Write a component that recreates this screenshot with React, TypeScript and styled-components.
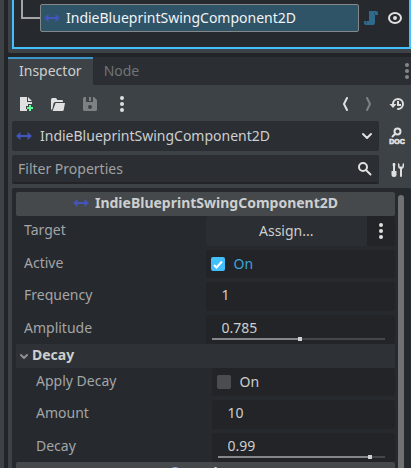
import React, { useState } from "react";
import styled, { createGlobalStyle, css } from "styled-components";

const c = {
  base: "#3d4246",
  gutter: "#232428",
  deep: "#26292e",
  field: "#2b2e32",
  value: "#232428",
  section: "#2e3135",
  heading: "#45494b",
  text: "#cdcfd0",
  label: "#a3a5a7",
  accent: "#42bffd",
  icon: "#e0e0e0",
};

const Global = createGlobalStyle`
  * { box-sizing: border-box; }
  body { margin: 0; background: ${c.gutter}; overflow: hidden; }
  body, button, input, select {
    font-family: "Noto Sans", sans-serif;
    font-size: 14px;
    line-height: 20px;
    color: ${c.text};
  }
  button, input, select { margin: 0; padding: 0; border: 0; background: none; outline: none; }
`;

const Window = styled.div`
  display: flex;
  height: 100vh;
  overflow: hidden;
`;
const SideStrip = styled.div`
  width: 4px;
  margin-right: 4px;
  flex: none;
  background: ${c.base};
`;
const Docks = styled.div`
  flex: 1;
  min-width: 0;
  display: flex;
  flex-direction: column;
  gap: 4px;
`;
const SceneDock = styled.section`
  padding: 0 0 4px 4px;
  background: ${c.base};
  border-radius: 0 0 0 2px;
`;
const SceneTree = styled.div`
  display: flex;
  align-items: flex-start;
  height: 49px;
  padding: 0 6px 0 7px;
  background: ${c.deep};
  border: 2px solid ${c.accent};
  border-top: 0;
`;
const Branch = styled.div`
  width: 19px;
  height: 19px;
  flex: none;
  border-left: 2px solid #a3a5a6;
  border-bottom: 2px solid #a3a5a6;
`;
const NodeItem = styled.div`
  flex: 1;
  min-width: 0;
  height: 28px;
  margin-top: 4px;
  padding: 0 3px;
  display: flex;
  align-items: center;
  gap: 6px;
  white-space: nowrap;
  color: #f2f4f5;
  background: #2f5367;
  border: 1px solid #858889;
  border-radius: 2px;
`;
const NodeActions = styled.div`
  height: 36px;
  padding-left: 4px;
  display: flex;
  align-items: center;
  gap: 8px;
`;
const IconButton = styled.button<{ $w?: number }>`
  width: ${(p) => p.$w ?? 28}px;
  height: 26px;
  flex: none;
  display: flex;
  align-items: center;
  justify-content: center;
  &:disabled { opacity: 0.4; }
`;

const Inspector = styled.section`
  flex: 1;
  min-height: 0;
  display: flex;
  flex-direction: column;
  background: ${c.base};
`;
const TabBar = styled.div`
  display: flex;
  height: 28px;
  flex: none;
  background: ${c.field};
`;
const Tab = styled.button<{ $active?: boolean }>`
  padding: 0 11px 2px;
  border-top: 2px solid transparent;
  color: #717476;
  ${(p) =>
    p.$active &&
    css`
      color: ${c.text};
      background: ${c.base};
      border-top-color: #3b95c8;
    `}
`;
const TabMenu = styled.button`
  width: 16px;
  margin-left: auto;
  margin-right: -4px;
  display: flex;
  align-items: center;
  justify-content: center;
`;
const Body = styled.div`
  flex: 1;
  min-height: 0;
  display: flex;
  flex-direction: column;
  gap: 4px;
  padding: 6px 0 0 4px;
`;
const Bar = styled.div`
  display: flex;
  align-items: center;
  gap: 4px;
  flex: none;
`;
const Spacer = styled.div`
  flex: 1;
`;
const Field = styled.div<{ $filter?: boolean }>`
  flex: 1;
  min-width: 0;
  height: ${(p) => (p.$filter ? 29 : 30)}px;
  display: grid;
  align-items: center;
  background: ${c.field};
  border-radius: 2px;
  border-bottom: ${(p) => (p.$filter ? `2px solid ${c.gutter}` : "0")};
  > * { grid-area: 1 / 1; }
`;
const Select = styled.select`
  appearance: none;
  width: 100%;
  height: 30px;
  padding: 0 32px 0 28px;
`;
const StartIcon = styled.span`
  display: flex;
  margin-left: 4px;
  pointer-events: none;
`;
const EndIcon = styled.span<{ $inset?: number }>`
  display: flex;
  justify-self: end;
  margin-right: ${(p) => p.$inset ?? 4}px;
  pointer-events: none;
`;
const FilterInput = styled.input`
  width: 100%;
  height: 27px;
  padding: 0 32px 0 6px;
  &::placeholder { color: #a0a2a4; opacity: 1; }
`;

const Properties = styled.div`
  flex: 1;
  min-height: 0;
  display: flex;
  gap: 3px;
  padding: 4px 7px 0 4px;
  background: ${c.deep};
  border-radius: 2px 2px 0 0;
`;
const List = styled.div`
  flex: 1;
  min-width: 0;
  overflow: hidden;
`;
const ScrollBar = styled.div`
  width: 6px;
  margin-top: 3px;
  background: #6f7173;
  border-radius: 3px 3px 0 0;
`;
const Category = styled.h2`
  height: 24px;
  margin: 0;
  padding-bottom: 2px;
  display: flex;
  align-items: center;
  justify-content: center;
  gap: 6px;
  font-size: 14px;
  font-weight: 700;
  line-height: 20px;
  white-space: nowrap;
  background: ${c.heading};
  border-radius: 2px;
`;
const SectionButton = styled.button`
  width: 100%;
  height: 24px;
  display: flex;
  align-items: center;
  gap: 4px;
  padding: 0 0 2px 4px;
  font-weight: 700;
  background: ${c.section};
`;
const Rows = styled.div<{ $nested?: boolean }>`
  display: flex;
  flex-direction: column;
  gap: 4px;
  padding-left: ${(p) => (p.$nested ? 12 : 0)}px;
`;
const Row = styled.div`
  display: grid;
  grid-template-columns: minmax(0, 1fr) minmax(0, 1fr);
`;
const Label = styled.label<{ $tall?: boolean }>`
  padding: ${(p) => (p.$tall ? 4 : 3)}px 8px;
  color: ${c.label};
`;
const Value = styled.div`
  position: relative;
  display: flex;
  background: ${c.value};
  border-radius: 2px;
`;
const AssignButton = styled.button`
  flex: 1;
  height: 30px;
  background: ${c.field};
  border-radius: 2px 0 0 2px;
`;
const MenuButton = styled(IconButton)`
  height: 30px;
`;
const CheckLabel = styled.label<{ $on: boolean }>`
  height: 28px;
  display: flex;
  align-items: center;
  gap: 9px;
  padding-left: 5px;
  color: ${(p) => (p.$on ? "#3ba5da" : c.text)};
`;
const CheckBox = styled.span`
  display: grid;
  > * { grid-area: 1 / 1; }
  > svg { pointer-events: none; }
`;
const CheckInput = styled.input`
  appearance: none;
  width: 14px;
  height: 14px;
  border-radius: 2px;
  background: #4b4c4f;
  &:checked { background: ${c.accent}; }
`;
const NumberInput = styled.input`
  width: 100%;
  height: 24px;
  margin-bottom: 5px;
  padding-left: 16px;
`;
const Slider = styled.input`
  appearance: none;
  position: absolute;
  left: 6px;
  right: 10px;
  bottom: 3px;
  width: calc(100% - 16px);
  height: 4px;
  background: linear-gradient(90deg, #868788 var(--fill), #45464a var(--fill)) center / 100% 2px no-repeat;
  &::-webkit-slider-thumb {
    appearance: none;
    width: 4px;
    height: 4px;
    background: #cfd0d1;
  }
`;

const Svg = ({ children, w = 16, h = 16 }: { children: React.ReactNode; w?: number; h?: number }) => (
  <svg width={w} height={h} viewBox={`0 0 ${w} ${h}`} fill={c.icon} aria-hidden="true">
    {children}
  </svg>
);

const SwingIcon = () => (
  <Svg>
    <path fill="#4355b9" d="M0 8l4.500-4v3h7V4L16 8l-4.500 4V9h-7v3z" />
  </Svg>
);
const DotsIcon = ({ dim }: { dim?: boolean }) => (
  <Svg>
    <g fill={dim ? "#85888a" : c.icon}>
      <circle cx="8" cy="2" r="2" />
      <circle cx="8" cy="8" r="2" />
      <circle cx="8" cy="14" r="2" />
    </g>
  </Svg>
);
const ScriptIcon = () => (
  <Svg>
    <path fill="#2f6a8a" d="M6 1v10H1v2a2 2 0 0 0 2 2h7a2 2 0 0 0 2-2V5h3V3a2 2 0 0 0-2-2z" />
    <path fill="#24506a" d="M11 2.500h1V5h-1zM3 11h1v2.500H3z" />
  </Svg>
);
const EyeIcon = () => (
  <Svg>
    <ellipse cx="8" cy="8" rx="6" ry="5" fill="none" stroke={c.icon} strokeWidth="2" />
    <circle cx="8" cy="8" r="2" />
  </Svg>
);
const NewIcon = () => (
  <Svg>
    <path d="M2 1v14h7v-2H8v-3h2V8h4V6H9V1z" />
    <path d="M10 1v4h4z" />
    <path fill="#5fff97" d="M11 9h2v2h2v2h-2v2h-2v-2H9v-2h2z" />
  </Svg>
);
const OpenIcon = () => (
  <Svg>
    <path d="M1 3.500A1.500 1.500 0 0 1 2.500 2H6l1.500 2H12a1 1 0 0 1 1 1v1H5.500a2 2 0 0 0-2 1.600L2.400 13 1 14z" />
    <path d="M5.600 7H15l-1.300 6.900a1.300 1.300 0 0 1-1.300 1.100H2.600z" />
  </Svg>
);
const SaveIcon = () => (
  <Svg>
    <path
      fillRule="evenodd"
      d="M2.500 1A1.500 1.500 0 0 0 1 2.500v11A1.500 1.500 0 0 0 2.500 15h11a1.500 1.500 0 0 0 1.500-1.500V4l-3-3h-1v5H4V1zM7 1h2v4H7zM8 9a2 2 0 1 1 0 4 2 2 0 0 1 0-4z"
    />
  </Svg>
);
const PrevIcon = () => (
  <Svg w={8}>
    <path d="M6 2L3 8l3 6" fill="none" stroke={c.icon} strokeWidth="2" strokeLinecap="round" strokeLinejoin="round" />
  </Svg>
);
const NextIcon = () => (
  <Svg w={8}>
    <path d="M2 2l3 6-3 6" fill="none" stroke={c.icon} strokeWidth="2" strokeLinecap="round" strokeLinejoin="round" />
  </Svg>
);
const HistoryIcon = () => (
  <Svg>
    <path d="M4 8a5 5 0 1 1 5 5" fill="none" stroke={c.icon} strokeWidth="2" strokeLinecap="round" />
    <path d="M0.500 8h7L4 12z" />
    <path d="M8 5h2v3h2v2H8z" />
  </Svg>
);
const DocIcon = () => (
  <Svg w={18} h={18}>
    <circle cx="9.500" cy="4.500" r="3" fill="none" stroke={c.icon} strokeWidth="2" />
    <path d="M7.500 6.500L4.500 9.500" fill="none" stroke={c.icon} strokeWidth="2" strokeLinecap="round" />
    <text
      x="9"
      y="17"
      textAnchor="middle"
      fontFamily="Liberation Sans, sans-serif"
      fontWeight="700"
      fontSize="7"
      stroke={c.icon}
      strokeWidth="0.700"
    >
      DOC
    </text>
  </Svg>
);
const ToolsIcon = () => (
  <Svg>
    <path d="M4 1h2l.500 2L6 4v5h1.500v3.500a2.500 2.500 0 0 1-5 0V9H4V4l-.500-1z" />
    <path d="M9 1v3.500a3 3 0 0 0 2 2.500v7a1 1 0 0 0 2 0V7a3 3 0 0 0 2-2.500V1l-1.500 1v2.500h-3V2z" />
  </Svg>
);
const ChevronIcon = () => (
  <Svg>
    <path d="M4 6l4 4 4-4" fill="none" stroke={c.icon} strokeWidth="2" strokeLinecap="round" strokeLinejoin="round" />
  </Svg>
);
const SectionChevron = () => (
  <Svg w={8} h={8}>
    <path d="M1 4l3 3 3-3" fill="none" stroke="#8e9092" strokeWidth="2" strokeLinecap="round" />
  </Svg>
);
const SearchIcon = () => (
  <Svg>
    <circle cx="6" cy="6" r="4" fill="none" stroke={c.icon} strokeWidth="2" />
    <path d="M9 9l4.500 4.500" fill="none" stroke={c.icon} strokeWidth="2" strokeLinecap="round" />
  </Svg>
);
const Node2DIcon = () => (
  <Svg>
    <circle cx="8" cy="8" r="5" fill="none" stroke="#8da5f3" strokeWidth="2" />
  </Svg>
);

function CheckRow({ id, label, initial }: { id: string; label: string; initial: boolean }) {
  const [on, setOn] = useState(initial);
  return (
    <Row>
      <Label htmlFor={id}>{label}</Label>
      <Value>
        <CheckLabel $on={on}>
          <CheckBox>
            <CheckInput id={id} type="checkbox" checked={on} onChange={(e) => setOn(e.target.checked)} />
            {on && (
              <Svg w={14} h={14}>
                <path d="M3 8l2.500 2.500L11 4.500" fill="none" stroke="#fff" strokeWidth="2" />
              </Svg>
            )}
          </CheckBox>
          On
        </CheckLabel>
      </Value>
    </Row>
  );
}

type NumberRowProps = { id: string; label: string; initial: number; range?: [number, number] };

function NumberRow({ id, label, initial, range }: NumberRowProps) {
  const [value, setValue] = useState(String(initial));
  const fill = range ? ((Number(value) - range[0]) / (range[1] - range[0])) * 100 : 0;
  return (
    <Row>
      <Label htmlFor={id}>{label}</Label>
      <Value>
        <NumberInput id={id} inputMode="decimal" value={value} onChange={(e) => setValue(e.target.value)} />
        {range && (
          <Slider
            type="range"
            aria-label={label}
            min={range[0]}
            max={range[1]}
            step="any"
            value={Number(value) || 0}
            onChange={(e) => setValue(String(Math.round(Number(e.target.value) * 1000) / 1000))}
            style={{ "--fill": `${fill}%` } as React.CSSProperties}
          />
        )}
      </Value>
    </Row>
  );
}

export default function App() {
  const [open, setOpen] = useState(true);
  return (
    <>
      <Global />
      <Window>
        <SideStrip />
        <Docks>
          <SceneDock>
            <SceneTree>
              <Branch />
              <NodeItem>
                <SwingIcon />
                IndieBlueprintSwingComponent2D
              </NodeItem>
              <NodeActions>
                <IconButton $w={16} aria-label="Open script"><ScriptIcon /></IconButton>
                <IconButton $w={16} aria-label="Toggle visibility"><EyeIcon /></IconButton>
              </NodeActions>
            </SceneTree>
          </SceneDock>

          <Inspector>
            <TabBar role="tablist">
              <Tab role="tab" aria-selected="true" $active>Inspector</Tab>
              <Tab role="tab" aria-selected="false">Node</Tab>
              <TabMenu aria-label="Dock options"><DotsIcon dim /></TabMenu>
            </TabBar>
            <Body>
              <Bar>
                <IconButton aria-label="New resource"><NewIcon /></IconButton>
                <IconButton aria-label="Load resource"><OpenIcon /></IconButton>
                <IconButton aria-label="Save resource" disabled><SaveIcon /></IconButton>
                <IconButton aria-label="More options"><DotsIcon /></IconButton>
                <Spacer />
                <IconButton $w={20} aria-label="Previous object"><PrevIcon /></IconButton>
                <IconButton $w={20} aria-label="Next object" disabled><NextIcon /></IconButton>
                <IconButton aria-label="History"><HistoryIcon /></IconButton>
              </Bar>
              <Bar>
                <Field>
                  <Select aria-label="Edited object">
                    <option>IndieBlueprintSwingComponent2D</option>
                  </Select>
                  <StartIcon><SwingIcon /></StartIcon>
                  <EndIcon><ChevronIcon /></EndIcon>
                </Field>
                <IconButton aria-label="Open documentation"><DocIcon /></IconButton>
              </Bar>
              <Bar>
                <Field $filter>
                  <FilterInput type="text" aria-label="Filter Properties" placeholder="Filter Properties" />
                  <EndIcon $inset={6}><SearchIcon /></EndIcon>
                </Field>
                <IconButton aria-label="Manage properties"><ToolsIcon /></IconButton>
              </Bar>
              <Properties>
                <List>
                  <Category><SwingIcon />IndieBlueprintSwingComponent2D</Category>
                  <Rows>
                    <Row>
                      <Label htmlFor="target" $tall>Target</Label>
                      <Value>
                        <AssignButton id="target">Assign...</AssignButton>
                        <MenuButton aria-label="Target options"><DotsIcon /></MenuButton>
                      </Value>
                    </Row>
                    <CheckRow id="active" label="Active" initial={true} />
                    <NumberRow id="frequency" label="Frequency" initial={1} />
                    <NumberRow id="amplitude" label="Amplitude" initial={0.785} range={[0, 1.54]} />
                  </Rows>
                  <SectionButton aria-expanded={open} onClick={() => setOpen(!open)}>
                    <SectionChevron />
                    Decay
                  </SectionButton>
                  {open && (
                    <Rows $nested>
                      <CheckRow id="apply-decay" label="Apply Decay" initial={false} />
                      <NumberRow id="amount" label="Amount" initial={10} />
                      <NumberRow id="decay" label="Decay" initial={0.99} range={[0.1, 1.07]} />
                    </Rows>
                  )}
                  <Category><Node2DIcon />Node2D</Category>
                </List>
                <ScrollBar />
              </Properties>
            </Body>
          </Inspector>
        </Docks>
      </Window>
    </>
  );
}
